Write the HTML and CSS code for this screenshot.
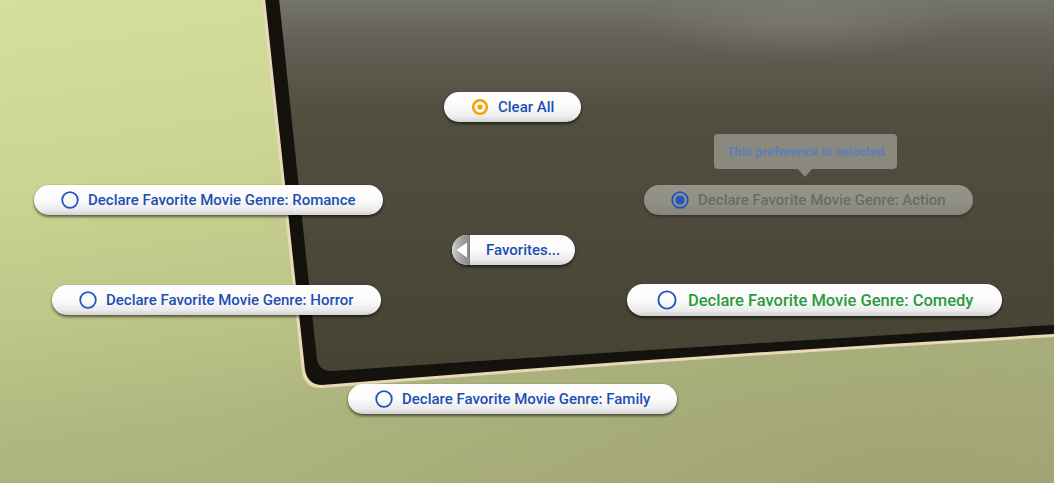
FILE: index.html
```html
<!DOCTYPE html>
<html lang="en">
<head>
<meta charset="utf-8">
<title>Pie Menu</title>
<link rel="stylesheet" href="styles.css">
</head>
<body>
<div class="scene">
  <svg class="tv" width="1054" height="483" viewBox="0 0 1054 483" aria-hidden="true">
    <defs>
      <linearGradient id="screenGrad" x1="0" y1="0" x2="0" y2="1">
        <stop offset="0" stop-color="#76756b"/>
        <stop offset="0.12" stop-color="#626055"/>
        <stop offset="0.3" stop-color="#524f41"/>
        <stop offset="0.7" stop-color="#4b4839"/>
        <stop offset="1" stop-color="#464334"/>
      </linearGradient>
      <radialGradient id="glow" cx="0.5" cy="0.5" r="0.5">
        <stop offset="0" stop-color="#8a897d" stop-opacity="0.45"/>
        <stop offset="1" stop-color="#8a897d" stop-opacity="0"/>
      </radialGradient>
    </defs>
    <path d="M262,-2 L302,372 Q305,389 322,388 Q700,357 1056,337 L1056,-2 Z" fill="#ead9b8"/>
    <path d="M265,-2 L305,370 Q308,385 322,385 Q700,354 1056,334 L1056,-2 Z" fill="#15120e"/>
    <path d="M279,-2 L317,360 Q320,372 332,371 Q700,346 1056,325 L1056,-2 Z" fill="url(#screenGrad)"/>
    <ellipse cx="800" cy="20" rx="160" ry="40" fill="url(#glow)"/>
  </svg>

  <div class="pie">
    <div class="item pos-clear">
      <span class="ico">
        <svg width="18" height="18" viewBox="0 0 18 18"><circle cx="9" cy="9" r="6.8" fill="none" stroke="#f5a100" stroke-width="2.6"/><circle cx="9" cy="9" r="2.6" fill="#f5a100"/></svg>
      </span>
      <span class="label">Clear All</span>
    </div>

    <div class="tip pos-tip">This preference is selected</div>

    <div class="item pos-romance">
      <span class="ico"><svg width="18" height="18" viewBox="0 0 18 18"><circle cx="9" cy="9" r="7.8" fill="none" stroke="#1f55c0" stroke-width="1.8"/></svg></span>
      <span class="label">Declare Favorite Movie Genre: Romance</span>
    </div>

    <div class="item disabled pos-action">
      <span class="ico"><svg width="18" height="18" viewBox="0 0 18 18"><circle cx="9" cy="9" r="7.8" fill="none" stroke="#1f55c0" stroke-width="1.8"/><circle cx="9" cy="9" r="4.6" fill="#1f55c0"/></svg></span>
      <span class="label">Declare Favorite Movie Genre: Action</span>
    </div>

    <div class="item back pos-fav">
      <span class="tab"><svg width="12" height="16" viewBox="0 0 12 16"><path d="M11,0.5 L0.5,8 L11,15.5 Z" fill="#ffffff"/></svg></span>
      <span class="label">Favorites...</span>
    </div>

    <div class="item pos-horror">
      <span class="ico"><svg width="18" height="18" viewBox="0 0 18 18"><circle cx="9" cy="9" r="7.8" fill="none" stroke="#1f55c0" stroke-width="1.8"/></svg></span>
      <span class="label">Declare Favorite Movie Genre: Horror</span>
    </div>

    <div class="item hot pos-comedy">
      <span class="ico"><svg width="20" height="20" viewBox="0 0 20 20"><circle cx="10" cy="10" r="8.6" fill="none" stroke="#1f55c0" stroke-width="1.9"/></svg></span>
      <span class="label">Declare Favorite Movie Genre: Comedy</span>
    </div>

    <div class="item pos-family">
      <span class="ico"><svg width="18" height="18" viewBox="0 0 18 18"><circle cx="9" cy="9" r="7.8" fill="none" stroke="#1f55c0" stroke-width="1.8"/></svg></span>
      <span class="label">Declare Favorite Movie Genre: Family</span>
    </div>
  </div>
</div>
</body>
</html>
```

FILE: styles.css
```css
* { box-sizing: border-box; }

html, body {
  margin: 0;
  padding: 0;
  width: 1054px;
  height: 483px;
  overflow: hidden;
}

body {
  font-family: Roboto, "Liberation Sans", Arial, sans-serif;
}

.scene {
  position: relative;
  width: 1054px;
  height: 483px;
  background:
    radial-gradient(ellipse 700px 300px at 900px 480px, rgba(140,140,100,0.3), rgba(140,140,100,0) 100%),
    linear-gradient(172deg, #d6de9d 0%, #ccd492 30%, #bfc789 50%, #aeb67f 72%, #a8ad7a 100%);
  overflow: hidden;
}

.tv {
  position: absolute;
  left: 0;
  top: 0;
  display: block;
}

.pie {
  position: absolute;
  inset: 0;
}

.item {
  position: absolute;
  display: inline-flex;
  align-items: center;
  gap: 9px;
  height: 30px;
  padding: 0 27px 0 27px;
  border-radius: 15px;
  background: linear-gradient(#ffffff 0%, #fbfbfb 50%, #ececec 82%, #d2d2d2 100%);
  box-shadow: 0 2px 3px rgba(0,0,0,0.55), 0 0 1px rgba(0,0,0,0.3);
  white-space: nowrap;
}

.ico {
  display: flex;
  width: 18px;
  height: 18px;
}

.label {
  font-size: 15px;
  font-weight: 500;
  color: #1d4fb3;
  letter-spacing: 0;
}

.disabled {
  background: linear-gradient(#95948b 0%, #908f86 60%, #86857c 100%);
  box-shadow: 0 2px 3px rgba(0,0,0,0.3);
}
.disabled .label { color: #6b6a64; }

.hot {
  height: 32px;
  border-radius: 16px;
  padding: 0 29px 0 30px;
  gap: 11px;
}
.hot .ico { width: 20px; height: 20px; }
.hot .label {
  font-size: 16.5px;
  color: #2a9b3a;
}

.back {
  padding: 0 15px 0 0;
  gap: 16px;
  overflow: hidden;
}
.back .tab {
  display: flex;
  align-items: center;
  justify-content: flex-start;
  width: 18px;
  height: 30px;
  padding-left: 4px;
  background: linear-gradient(90deg, #cfcfcf 0%, #b0b0b0 35%, #969696 75%, #8c8c8c 100%);
  border-right: 1px solid #7f7f7f;
}

.tip {
  position: absolute;
  width: 183px;
  height: 35px;
  border-radius: 4px;
  background: #8a897f;
  color: #5d7fb5;
  font-size: 13px;
  font-weight: 700;
  display: flex;
  align-items: center;
  justify-content: center;
}
.tip::after {
  content: "";
  position: absolute;
  left: 84px;
  bottom: -8px;
  border-left: 7px solid transparent;
  border-right: 7px solid transparent;
  border-top: 8px solid #8a897f;
}

.pos-clear   { left: 444px; top: 92px; }
.pos-tip     { left: 714px; top: 134px; }
.pos-romance { left: 34px;  top: 185px; }
.pos-action  { left: 644px; top: 185px; }
.pos-fav     { left: 452px; top: 235px; }
.pos-horror  { left: 52px;  top: 285px; }
.pos-comedy  { left: 627px; top: 284px; }
.pos-family  { left: 348px; top: 384px; }
```
